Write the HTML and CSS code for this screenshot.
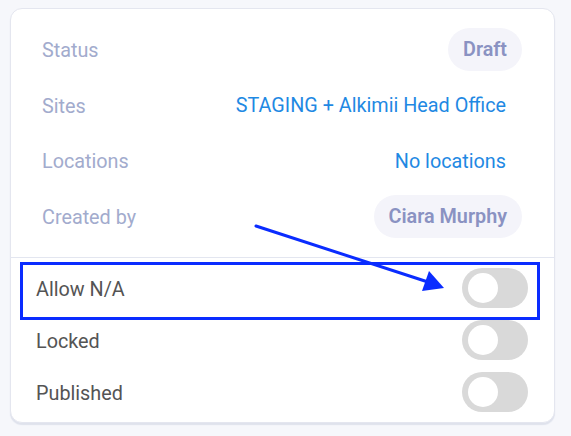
FILE: index.html
```html
<!DOCTYPE html>
<html lang="en">
<head>
    <meta charset="UTF-8">
    <meta name="viewport" content="width=device-width, initial-scale=1.0">
    <title>Form settings</title>
    <link rel="stylesheet" href="styles.css">
</head>
<body>
    <div class="card">
        <div class="details">
            <div class="row">
                <span class="label">Status</span>
                <span class="pill">Draft</span>
            </div>
            <div class="row">
                <span class="label">Sites</span>
                <span class="link">STAGING + Alkimii Head Office</span>
            </div>
            <div class="row">
                <span class="label">Locations</span>
                <span class="link">No locations</span>
            </div>
            <div class="row">
                <span class="label">Created by</span>
                <span class="pill">Ciara Murphy</span>
            </div>
        </div>
        <div class="options">
            <div class="option">
                <span class="name">Allow N/A</span>
                <span class="toggle"></span>
            </div>
            <div class="option">
                <span class="name">Locked</span>
                <span class="toggle"></span>
            </div>
            <div class="option">
                <span class="name">Published</span>
                <span class="toggle"></span>
            </div>
        </div>
    </div>

    <!-- annotation drawn over the screenshot -->
    <div class="highlight"></div>
    <svg class="arrow" width="571" height="436" viewBox="0 0 571 436">
        <line x1="256" y1="226" x2="428" y2="282" stroke="#0a2cff" stroke-width="3" stroke-linecap="round"/>
        <polygon points="444,288 422,291 429,271" fill="#0a2cff"/>
    </svg>
</body>
</html>
```

FILE: styles.css
```css
body {
    margin: 0;
    padding: 8px 16px 12px 10px;
    background-color: #f6f7fb;
    font-family: Roboto, "Liberation Sans", sans-serif;
    font-size: 19.8px;
}
.card {
    width: 543px;
    background-color: #fff;
    border: 1px solid #e4e6ef;
    border-radius: 12px;
    box-shadow: 0 2px 1px #dfe2ec;
}
.details {
    display: flex;
    flex-direction: column;
    gap: 12.5px;
    padding: 19px 32px 19px 31px;
    border-bottom: 1px solid #e3e6f0;
}
.row {
    display: flex;
    justify-content: space-between;
    align-items: center;
    height: 43px;
}
.label {
    color: #a2abcd;
    padding-top: 2px;
}
.link {
    color: #1f89e3;
    padding-right: 16px;
    padding-top: 1px;
}
.pill {
    background-color: #f4f4fa;
    color: #8a92c2;
    font-weight: 600;
    padding: 0 15px;
    height: 43px;
    line-height: 44px;
    border-radius: 22px;
}
.options {
    display: flex;
    flex-direction: column;
    gap: 12px;
    padding: 10px 26px 10px 25px;
    color: #545454;
}
.option {
    display: flex;
    justify-content: space-between;
    align-items: center;
    height: 40px;
}
.name {
    padding-top: 4px;
}
.toggle {
    position: relative;
    width: 66px;
    height: 40px;
    border-radius: 20px;
    background-color: #d9d9d9;
}
.toggle::after {
    content: "";
    position: absolute;
    left: 6px;
    top: 5px;
    width: 30px;
    height: 30px;
    border-radius: 50%;
    background-color: #fff;
}
.highlight {
    position: absolute;
    left: 20px;
    top: 262px;
    width: 514px;
    height: 52px;
    border: 3px solid #0a2cff;
}
.arrow {
    position: absolute;
    left: 0;
    top: 0;
}
```
